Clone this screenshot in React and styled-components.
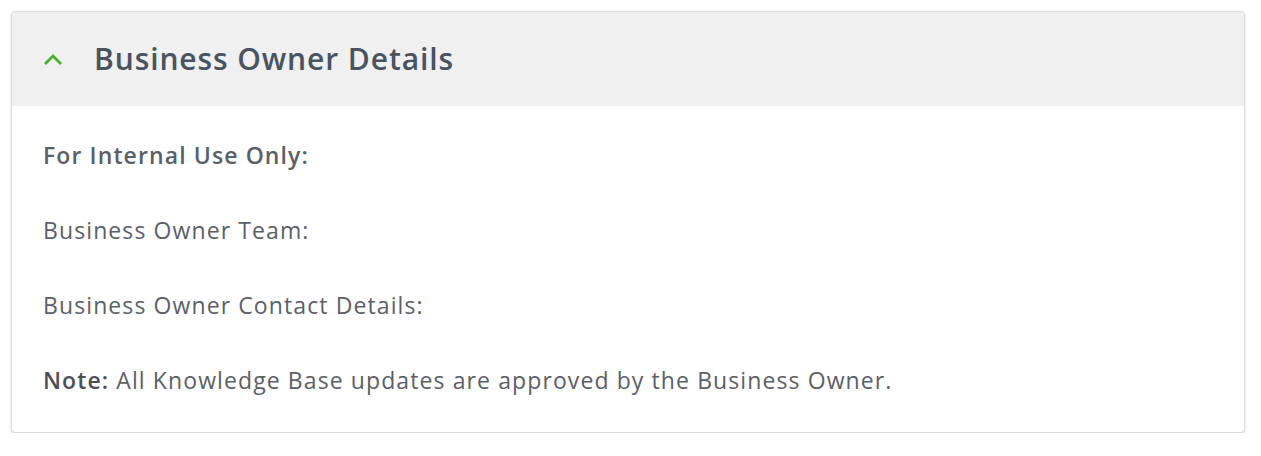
import React from "react";
import styled, { createGlobalStyle } from "styled-components";

const Global = createGlobalStyle`
  html, body { margin: 0; padding: 0; background: #fff; }
  body { font-family: "Open Sans", "Liberation Sans", sans-serif; }
`;

const Page = styled.div`
  padding: 11px 16px 0 11px;
`;

const Card = styled.section`
  border: 1px solid #dcdcdc;
  border-radius: 4px;
  box-shadow: 0 1px 3px rgba(0, 0, 0, 0.14);
  overflow: hidden;
  background: #fff;
`;

const Header = styled.div`
  display: flex;
  align-items: center;
  height: 94px;
  background: #f0f0f0;
  padding-left: 31px;
  gap: 31px;
`;

const Title = styled.h2`
  margin: 0;
  font-size: 30px;
  font-weight: 600;
  letter-spacing: 0.9px;
  color: #4a5360;
  transform: translateY(-1px);
`;

const Body = styled.div`
  padding: 34px 31px 37px;
  display: flex;
  flex-direction: column;
  gap: 45px;
`;

const Line = styled.p`
  margin: 0;
  font-size: 23px;
  line-height: 30px;
  letter-spacing: 1.1px;
  color: #5b6068;
  font-weight: ${(p) => (p.$bold ? 600 : 400)};
  b { font-weight: 600; color: #4b5058; }
`;

const Chevron = () => (
  <svg width="20" height="13" viewBox="0 0 20 13">
    <path d="M2 11 L10 3 L18 11" fill="none" stroke="#4caf30" strokeWidth="2.8" />
  </svg>
);

export default function App() {
  return (
    <Page>
      <Global />
      <Card>
        <Header>
          <Chevron />
          <Title>Business Owner Details</Title>
        </Header>
        <Body>
          <Line $bold>For Internal Use Only:</Line>
          <Line>Business Owner Team:</Line>
          <Line>Business Owner Contact Details:</Line>
          <Line>
            <b>Note:</b> All Knowledge Base updates are approved by the Business Owner.
          </Line>
        </Body>
      </Card>
    </Page>
  );
}
